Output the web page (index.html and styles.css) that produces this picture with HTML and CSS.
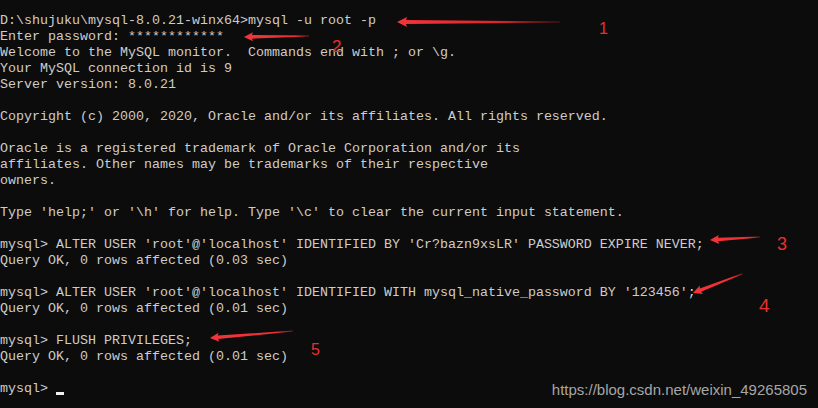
FILE: index.html
```html
<!DOCTYPE html>
<html>
<head>
<meta charset="utf-8">
<link rel="stylesheet" href="styles.css">
</head>
<body>
<main class="console">
<pre class="output">D:\shujuku\mysql-8.0.21-winx64&gt;mysql -u root -p
Enter password: ************
Welcome to the MySQL monitor.  Commands end with ; or \g.
Your MySQL connection id is 9
Server version: 8.0.21

Copyright (c) 2000, 2020, Oracle and/or its affiliates. All rights reserved.

Oracle is a registered trademark of Oracle Corporation and/or its
affiliates. Other names may be trademarks of their respective
owners.

Type 'help;' or '\h' for help. Type '\c' to clear the current input statement.

mysql&gt; ALTER USER 'root'@'localhost' IDENTIFIED BY 'Cr?bazn9xsLR' PASSWORD EXPIRE NEVER;
Query OK, 0 rows affected (0.03 sec)

mysql&gt; ALTER USER 'root'@'localhost' IDENTIFIED WITH mysql_native_password BY '123456';
Query OK, 0 rows affected (0.01 sec)

mysql&gt; FLUSH PRIVILEGES;
Query OK, 0 rows affected (0.01 sec)

mysql&gt; <span class="cursor"></span></pre>
<svg class="marks" width="818" height="408" viewBox="0 0 818 408">
  <defs>
    <linearGradient id="fade" x1="0" y1="0" x2="1" y2="0">
      <stop offset="0" stop-color="#f2353a"/>
      <stop offset="0.6" stop-color="#e0262b"/>
      <stop offset="1" stop-color="#5a1414"/>
    </linearGradient>
    <linearGradient id="fade2" x1="0" y1="0" x2="1" y2="0">
      <stop offset="0" stop-color="#f2353a"/>
      <stop offset="0.8" stop-color="#ec2f33"/>
      <stop offset="1" stop-color="#7a1a1a"/>
    </linearGradient>
  </defs>
  <polygon fill="url(#fade)" transform="translate(397,22)" points="0,0 10,-5 9,-2 163,-0.4 163,0.4 9,2 10,5"/>
  <polygon fill="url(#fade2)" transform="translate(244,37) rotate(-0.9)" points="0,0 9,-4.5 8,-1.8 65,-0.5 65,0.5 8,1.8 9,4.5"/>
  <polygon fill="url(#fade2)" transform="translate(710,240) rotate(-3.4)" points="0,0 9,-4.5 8,-1.8 50,-0.5 50,0.5 8,1.8 9,4.5"/>
  <polygon fill="url(#fade2)" transform="translate(693,293) rotate(-21.2)" points="0,0 9,-4.5 8,-1.8 53,-0.5 53,0.5 8,1.8 9,4.5"/>
  <polygon fill="url(#fade2)" transform="translate(210,338) rotate(-4.8)" points="0,0 9,-4.5 8,-1.8 83,-0.5 83,0.5 8,1.8 9,4.5"/>
  <text class="num" x="599" y="34" font-size="16">1</text>
  <text class="num" x="332" y="52" font-size="17">2</text>
  <text class="num" x="777" y="250" font-size="18">3</text>
  <text class="num" x="759" y="312" font-size="19">4</text>
  <text class="num" x="311" y="355" font-size="16">5</text>
</svg>
<div class="watermark">https://blog.csdn.net/weixin_49265805</div>
</main>
</body>
</html>
```
FILE: styles.css
```css
html, body {
  margin: 0;
  padding: 0;
  background: #0c0c0c;
}
.console {
  position: relative;
  width: 818px;
  height: 408px;
  overflow: hidden;
  background: #0c0c0c;
}
.output {
  margin: 0;
  padding: 13px 0 0 0;
  font-family: "Liberation Mono", "DejaVu Sans Mono", monospace;
  font-size: 13.333px;
  line-height: 16px;
  color: #cccccc;
  white-space: pre;
}
.cursor {
  display: inline-block;
  width: 8px;
  height: 3px;
  background: #f0f0f0;
  vertical-align: -3px;
}
.marks {
  position: absolute;
  left: 0;
  top: 0;
  pointer-events: none;
}
.num {
  font-family: "Liberation Sans", Arial, sans-serif;
  fill: #e8302c;
}
.watermark {
  position: absolute;
  right: 11px;
  bottom: 9px;
  font-family: "Liberation Sans", Arial, sans-serif;
  font-size: 15px;
  line-height: 18px;
  color: #a6a6a6;
}
```
